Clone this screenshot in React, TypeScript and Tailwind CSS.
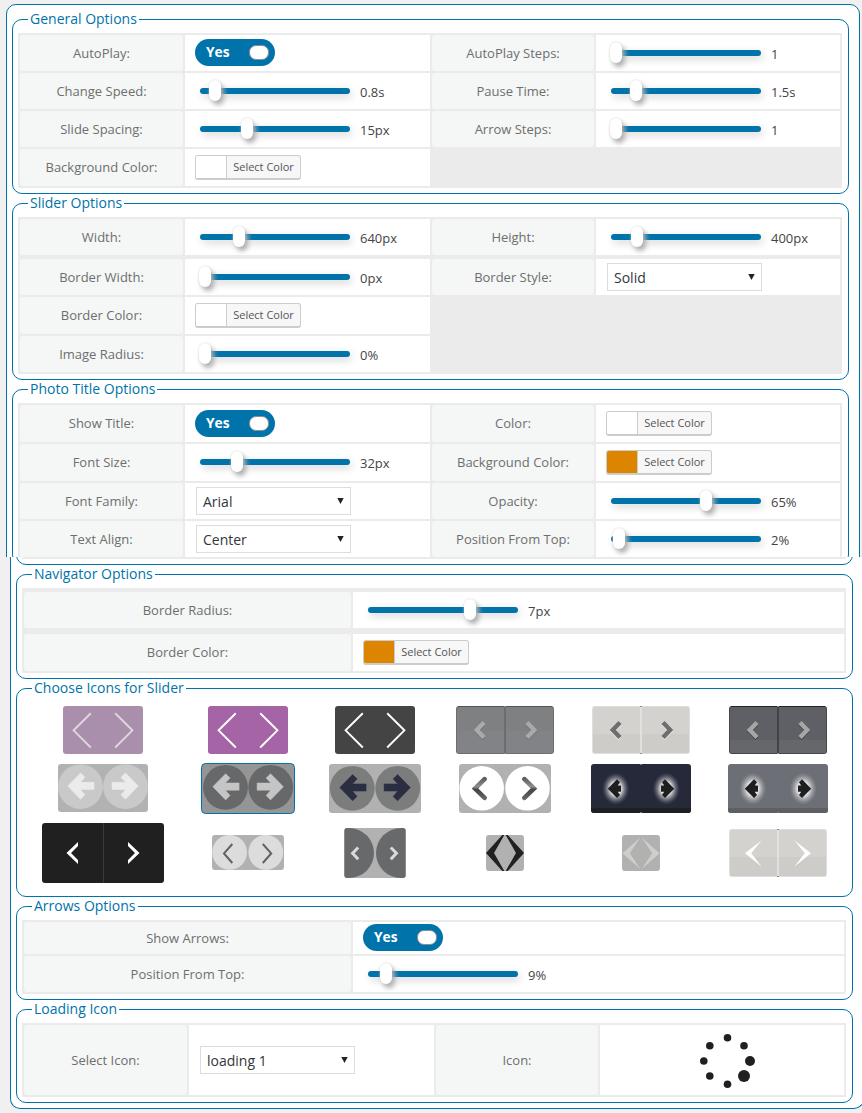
import React, { useId } from "react";

type Kids = { children?: React.ReactNode };

function Group({ title, className, children }: Kids & { title: string; className: string }) {
  return (
    <fieldset className={`box-border w-[837px] rounded-[10px] border border-[#0073aa] ${className}`}>
      <legend className="ml-[15px] h-[21px] px-[2px] text-[14px] leading-[20px] whitespace-nowrap text-[#0073aa]">
        {title}
      </legend>
      {children}
    </fieldset>
  );
}

function Table({ className = "pt-[2px]", children }: Kids & { className?: string }) {
  return (
    <div className={`mt-[3px] ml-[5px] flex w-[824px] flex-col gap-[2px] bg-[#ebebeb] px-[2px] pb-[2px] ${className}`}>
      {children}
    </div>
  );
}

const FOUR = "grid grid-cols-[163px_245px_162px_244px] gap-[2px]";
const TWO = "grid grid-cols-[327px_491px] gap-[2px]";

function Label({ children }: Kids) {
  return (
    <div className="flex items-center justify-center rounded-[3px] bg-[#f4f7f6] pb-[0.4px] text-[13px] leading-[18px] whitespace-nowrap text-[#6e6e6e]">
      {children}
    </div>
  );
}

function Cell({ children }: Kids) {
  return <div className="flex items-start bg-white">{children}</div>;
}

function Slider({ at, value }: { at: number; value: string }) {
  return (
    <>
      <div className="relative mt-[15px] ml-[15px] h-[6px] w-[150px] rounded-[3px] bg-[#0073aa] shadow-[2px_3px_8px_rgba(0,0,0,0.18)]">
        <div
          className="absolute top-[-8px] -ml-px h-[21px] w-[12px] rounded-[6px] bg-white shadow-[3px_4px_5px_#b0b0b0,0_0_2px_#d0d0d0]"
          style={{ left: at }}
        />
      </div>
      <span className="mt-[10px] ml-[10px] text-[13px] leading-[18px] text-[#444]">{value}</span>
    </>
  );
}

function Toggle({ className }: { className: string }) {
  return (
    <div className={`ml-[10px] flex h-[27px] w-[80px] items-center justify-between rounded-full bg-[#0073aa] pr-[6px] pl-[11px] ${className}`}>
      <span className="-mt-[2px] text-[13.8px] leading-[27px] font-bold text-white">Yes</span>
      <span className="h-[15px] w-[20px] rounded-[7px] border border-[#8c8c96] bg-white" />
    </div>
  );
}

function Color({ swatch = "bg-white" }: { swatch?: string }) {
  return (
    <div className="mt-[6px] ml-[10px] flex h-[25px] w-[106px] overflow-hidden rounded-[3px] border border-b-2 border-[#ccc] bg-[#f7f7f7]">
      <span className={`w-[30px] ${swatch}`} />
      <span className="flex-1 border-l border-[#ccc] text-center text-[11px] leading-[22px] whitespace-nowrap text-[#555]">
        Select Color
      </span>
    </div>
  );
}

function Select({ value, className = "mt-[4px]" }: { value: string; className?: string }) {
  return (
    <div className={`ml-[11px] flex h-[28px] w-[155px] items-center justify-between border border-[#ddd] bg-white pr-[6px] pl-[6px] ${className}`}>
      <span className="mt-[2px] text-[14px] leading-[20px] text-[#32373c]">{value}</span>
      <svg width="7" height="8" viewBox="0 0 7 8">
        <path d="M0.3 1H6.7L3.5 7Z" fill="#222" />
      </svg>
    </div>
  );
}

/* ---- arrow icon pairs ---- */

function Icon({ w, h, children }: Kids & { w: number; h: number }) {
  return (
    <svg width={w} height={h} viewBox={`0 0 ${w} ${h}`} className="block">
      {children}
    </svg>
  );
}

function ThinPair({ bg, fg }: { bg: string; fg: string }) {
  return (
    <Icon w={80} h={48}>
      <rect width="80" height="48" rx="3" fill={bg} />
      <path d="M27.8 7.3L10.6 24.3L27.8 41.5M52.2 7.3L69.4 24.3L52.2 41.5" fill="none" stroke={fg} strokeWidth="1.9" />
    </Icon>
  );
}

function TilePair({
  top, bottom, split, edge, line, cap, fg, shade,
}: {
  top: string; bottom: string; split: number; edge: string; line: string; cap: string; fg?: string; shade?: string;
}) {
  const d = "M28 16.5L20.8 24L28 31.5M71 16.5L78.2 24L71 31.5";
  return (
    <Icon w={98} h={48}>
      <rect width="98" height="48" rx="3" fill={edge} />
      <path d="M2 0.5H96" stroke={cap} strokeWidth="1" />
      <rect x="1" y="1" width="96" height="46" rx="2" fill={top} />
      <path d={`M1 ${split}H97V46L96 47H2L1 46Z`} fill={bottom} />
      <path d="M49 1V47" stroke={line} strokeWidth="1.8" />
      <path d="M48 0.5H50M48 47.5H50" stroke="#8b8b8b" />
      {fg ? (
        <>
          <path d={d} transform="translate(0 1)" fill="none" stroke={shade} strokeWidth="4.4" strokeLinejoin="miter" />
          <path d={d} fill="none" stroke={fg} strokeWidth="4.4" strokeLinejoin="miter" />
        </>
      ) : (
        <path d="M32.7 11.3L16 24.3L32.7 37.7L22.2 24.3ZM65.3 11.3L82 24.3L65.3 37.7L75.8 24.3Z" fill="#fff" />
      )}
    </Icon>
  );
}

const ARROW_L = "M9.7 22L22.5 9L27 13.3L22.3 18.3H36V25.5H22.3L27 30.8L22.5 35.2Z";
const ARROW_R = "M80.3 22L67.5 9L63 13.3L67.7 18.3H54V25.5H67.7L63 30.8L67.5 35.2Z";

function DiscPair({
  w, h, boxH, bg, disc, fg, c1, c2, cy, dx, dy, border,
}: {
  w: number; h: number; boxH: number; bg: string; disc: string; fg: string;
  c1: number; c2: number; cy: number; dx: number; dy: number; border?: boolean;
}) {
  return (
    <Icon w={w} h={h}>
      {border ? (
        <rect x="0.5" y="0.5" width={w - 1} height={boxH - 1} rx="4" fill={bg} stroke="#0073aa" />
      ) : (
        <rect width={w} height={boxH} rx="3" fill={bg} />
      )}
      <circle cx={c1} cy={cy} r="22.4" fill={disc} />
      <circle cx={c2} cy={cy} r="22.4" fill={disc} />
      <g transform={`translate(${dx} ${dy})`} fill={fg} stroke={fg} strokeWidth="0.5">
        <path d={ARROW_L} />
        <path d={ARROW_R} />
      </g>
    </Icon>
  );
}

function GlossPair() {
  const id = useId();
  return (
    <Icon w={92} h={49}>
      <defs>
        <linearGradient id={id} gradientUnits="userSpaceOnUse" x1="0" y1="13" x2="0" y2="36">
          <stop offset="0" stopColor="#555" />
          <stop offset="0.42" stopColor="#8f8f8f" />
          <stop offset="0.55" stopColor="#444" />
          <stop offset="1" stopColor="#6c6c6c" />
        </linearGradient>
      </defs>
      <rect width="92" height="49" rx="3" fill="#b1b1b1" />
      <circle cx="22.7" cy="24.3" r="22.3" fill="#fff" />
      <circle cx="68.5" cy="24.3" r="22.3" fill="#fff" />
      <path
        d="M25.6 15.2L16 24.5L25.6 33.8M65.4 15.2L75 24.5L65.4 33.8"
        fill="none" stroke={`url(#${id})`} strokeWidth="4.6" strokeLinecap="round"
      />
    </Icon>
  );
}

function GlowPair({ bg, base }: { bg: string; base: string }) {
  const id = useId();
  return (
    <Icon w={100} h={49}>
      <defs>
        <radialGradient id={id}>
          <stop offset="0" stopColor="#fff" />
          <stop offset="0.4" stopColor="#fff" stopOpacity="0.85" />
          <stop offset="0.65" stopColor="#fff" stopOpacity="0.38" />
          <stop offset="0.85" stopColor="#fff" stopOpacity="0.12" />
          <stop offset="1" stopColor="#fff" stopOpacity="0" />
        </radialGradient>
      </defs>
      <rect width="100" height="49" rx="3" fill={bg} />
      <path d="M0 44H100V46Q100 49 97 49H3Q0 49 0 46Z" fill={base} />
      <path d="M49 0.5H51M49 48.5H51" stroke="#777" />
      <ellipse cx="24.7" cy="24.7" rx="13.5" ry="16" fill={`url(#${id})`} />
      <ellipse cx="75.3" cy="24.7" rx="13.5" ry="16" fill={`url(#${id})`} />
      <g fill="#1e1e1e">
        <path d="M16.8 24.7L26 15.3L29 18.3L26.8 21.5H30V27.7H26.8L29 31L26 34Z" />
        <path d="M83.2 24.7L74 15.3L71 18.3L73.2 21.5H70V27.7H73.2L71 31L74 34Z" />
      </g>
    </Icon>
  );
}

function IconGrid() {
  return (
    <div className="mt-[3px] ml-[5px] grid w-[824px] grid-cols-[162px_128px_126px_134px_138px_136px] grid-rows-[56px_61px_68px] place-items-center">
      <ThinPair bg="#aa8fac" fg="#dcd8dc" />
      <ThinPair bg="#a464a6" fg="#ffffff" />
      <ThinPair bg="#444444" fg="#ffffff" />
      <TilePair top="#7f8081" bottom="#828387" split={25} edge="#6d6e70" line="#6b6b6b" cap="#525355" fg="#a9aaab" shade="#6f7072" />
      <TilePair top="#d3d2ce" bottom="#cdccc8" split={28} edge="#dededc" line="#e3e3e1" cap="#dcdcda" fg="#6f6e6d" shade="#eeeeec" />
      <TilePair top="#5e6066" bottom="#66676a" split={34} edge="#45464a" line="#3f4043" cap="#242427" fg="#a6a6a6" shade="#404146" />

      <DiscPair w={90} h={49} boxH={48} bg="#b2b2b2" disc="#c9c9c9" fg="#ebebeb" c1={22.5} c2={67.5} cy={22.6} dx={0} dy={0} />
      <DiscPair w={94} h={51} boxH={51} bg="#959595" disc="#666869" fg="#c5c5c5" c1={24.5} c2={69.7} cy={24.3} dx={2.1} dy={1.7} border />
      <DiscPair w={92} h={49} boxH={49} bg="#b1b1b1" disc="#7b7d7c" fg="#2b2d40" c1={23.3} c2={68.7} cy={24.3} dx={1.1} dy={1.6} />
      <GlossPair />
      <GlowPair bg="#262939" base="#1e1f20" />
      <GlowPair bg="#6d6f77" base="#5d5f63" />

      <Icon w={122} h={60}>
        <rect width="122" height="60" rx="3" fill="#202020" />
        <path d="M61.5 0V60" stroke="#3a3944" />
        <path d="M36 19L24.5 30L36 41V37L29 30L36 23ZM86 19L97.5 30L86 41V37L93 30L86 23Z" fill="#fff" />
      </Icon>
      <Icon w={72} h={36}>
        <rect width="72" height="35" rx="3" fill="#b1b1b1" />
        <circle cx="17.6" cy="17.4" r="17.4" fill="#dcdcdc" />
        <circle cx="53.8" cy="17.4" r="17.4" fill="#dcdcdc" />
        <path d="M20.3 9L12 18.4L20.3 28M50.8 9L59.2 18.4L50.8 28" fill="none" stroke="#5f6164" strokeWidth="2" />
      </Icon>
      <Icon w={62} h={50}>
        <rect width="62" height="50" rx="3" fill="#b1b1b1" />
        <path d="M3 0H5A25 25 0 0 1 5 50H3Q0.5 50 0.5 47V3Q0.5 0 3 0Z" fill="#67696b" />
        <path d="M59 0H57A25 25 0 0 0 57 50H59Q61.5 50 61.5 47V3Q61.5 0 59 0Z" fill="#67696b" />
        <path d="M14.2 19.5L8.6 25.3L14.2 31.2M46.8 19.5L52.4 25.3L46.8 31.2" fill="none" stroke="#dadada" strokeWidth="3" />
      </Icon>
      <Icon w={38} h={36}>
        <rect width="38" height="36" rx="3" fill="#b1b1b1" />
        <path d="M16.3 0H18.3L8 18L18.3 36H16.3L0 18ZM21.7 0H19.7L30 18L19.7 36H21.7L38 18Z" fill="#212121" />
      </Icon>
      <Icon w={38} h={36}>
        <rect width="38" height="36" rx="3" fill="#b1b1b1" />
        <path d="M18.3 2.5L7.8 18.3L18.3 34L0.4 18.3ZM19.7 2.5L30.2 18.3L19.7 34L37.6 18.3Z" fill="#cfcecb" />
      </Icon>
      <TilePair top="#d3d2ce" bottom="#cdccc8" split={28} edge="#dededc" line="#e3e3e1" cap="#dcdcda" />
    </div>
  );
}

const DOTS: [number, number, number][] = [
  [27.5, 4.7, 3.8], [44, 12.8, 3.8], [50, 28, 5], [44, 43, 6],
  [27.5, 51.2, 3.8], [9.8, 43, 3.8], [3.8, 28, 3.8], [9.8, 12.8, 3.8],
];

export default function App() {
  return (
    <div className="h-[1113px] w-[862px] overflow-hidden bg-[#f0f0f0] font-['Open_Sans',sans-serif]">
      <div className="h-[557px] overflow-hidden pt-[4px] pl-[6px]">
        <div className="h-[600px] w-[854px] rounded-[10px] border border-[#0073aa] bg-white pt-[4px] pl-[5px]">
          <Group title="General Options" className="h-[185px]">
            <Table>
              <div className={`${FOUR} h-[36px]`}>
                <Label>AutoPlay:</Label>
                <Cell><Toggle className="mt-[4px]" /></Cell>
                <Label>AutoPlay Steps:</Label>
                <Cell><Slider at={0} value="1" /></Cell>
              </div>
              <div className={`${FOUR} h-[36px]`}>
                <Label>Change Speed:</Label>
                <Cell><Slider at={10} value="0.8s" /></Cell>
                <Label>Pause Time:</Label>
                <Cell><Slider at={20} value="1.5s" /></Cell>
              </div>
              <div className={`${FOUR} h-[36px]`}>
                <Label>Slide Spacing:</Label>
                <Cell><Slider at={42} value="15px" /></Cell>
                <Label>Arrow Steps:</Label>
                <Cell><Slider at={0} value="1" /></Cell>
              </div>
              <div className={`${FOUR} h-[37px]`}>
                <Label>Background Color:</Label>
                <Cell><Color /></Cell>
              </div>
            </Table>
          </Group>

          <Group title="Slider Options" className="-mt-px h-[187px]">
            <Table>
              <div className={`${FOUR} mb-[2px] h-[36px]`}>
                <Label>Width:</Label>
                <Cell><Slider at={34} value="640px" /></Cell>
                <Label>Height:</Label>
                <Cell><Slider at={21} value="400px" /></Cell>
              </div>
              <div className={`${FOUR} h-[36px]`}>
                <Label>Border Width:</Label>
                <Cell><Slider at={0} value="0px" /></Cell>
                <Label>Border Style:</Label>
                <Cell><Select value="Solid" /></Cell>
              </div>
              <div className={`${FOUR} h-[37px]`}>
                <Label>Border Color:</Label>
                <Cell><Color /></Cell>
              </div>
              <div className={`${FOUR} h-[36px]`}>
                <Label>Image Radius:</Label>
                <Cell><Slider at={0} value="0%" /></Cell>
              </div>
            </Table>
          </Group>

          <Group title="Photo Title Options" className="-mt-px h-[186px]">
            <Table>
              <div className={`${FOUR} h-[37px]`}>
                <Label>Show Title:</Label>
                <Cell><Toggle className="mt-[5px]" /></Cell>
                <Label>Color:</Label>
                <Cell><Color /></Cell>
              </div>
              <div className={`${FOUR} h-[37px]`}>
                <Label>Font Size:</Label>
                <Cell><Slider at={32} value="32px" /></Cell>
                <Label>Background Color:</Label>
                <Cell><Color swatch="bg-[#dd8500]" /></Cell>
              </div>
              <div className={`${FOUR} h-[36px]`}>
                <Label>Font Family:</Label>
                <Cell><Select value="Arial" /></Cell>
                <Label>Opacity:</Label>
                <Cell><Slider at={90} value="65%" /></Cell>
              </div>
              <div className={`${FOUR} h-[36px]`}>
                <Label>Text Align:</Label>
                <Cell><Select value="Center" /></Cell>
                <Label>Position From Top:</Label>
                <Cell><Slider at={3} value="2%" /></Cell>
              </div>
            </Table>
          </Group>
        </div>
      </div>

      <div className="pl-[10px]">
        <div className="h-[552px] w-[854px] rounded-b-[10px] border border-t-0 border-[#0073aa] bg-white pl-[5px]">
          <div className="flex h-[8px] w-[837px] flex-col justify-end overflow-hidden">
            <div className="flex h-[40px] shrink-0 flex-col justify-end rounded-[10px] border border-[#0073aa] pb-[5px] pl-[5px]">
              <div className="h-[2px] w-[824px] bg-[#ebebeb]" />
            </div>
          </div>

          <Group title="Navigator Options" className="-mt-px h-[115px]">
            <Table className="pt-[4px]">
              <div className={`${TWO} mb-[4px] h-[36px]`}>
                <Label>Border Radius:</Label>
                <Cell><Slider at={97} value="7px" /></Cell>
              </div>
              <div className={`${TWO} h-[37px]`}>
                <Label>Border Color:</Label>
                <Cell><Color swatch="bg-[#dd8500]" /></Cell>
              </div>
            </Table>
          </Group>

          <Group title="Choose Icons for Slider" className="-mt-px h-[219px]">
            <IconGrid />
          </Group>

          <Group title="Arrows Options" className="-mt-px h-[104px]">
            <Table>
              <div className={`${TWO} h-[32px]`}>
                <Label>Show Arrows:</Label>
                <Cell><Toggle className="mt-[2px]" /></Cell>
              </div>
              <div className={`${TWO} h-[36px]`}>
                <Label>Position From Top:</Label>
                <Cell><Slider at={13} value="9%" /></Cell>
              </div>
            </Table>
          </Group>

          <Group title="Loading Icon" className="-mt-px h-[104px]">
            <Table>
              <div className={`${FOUR} h-[70px]`}>
                <Label>Select Icon:</Label>
                <Cell><Select value="loading 1" className="mt-[21px]" /></Cell>
                <Label>Icon:</Label>
                <Cell>
                  <svg width="56" height="56" viewBox="0 0 56 56" className="mt-[8px] ml-[100px]">
                    {DOTS.map(([x, y, r]) => (
                      <circle key={`${x}-${y}`} cx={x} cy={y} r={r} fill="#202020" />
                    ))}
                  </svg>
                </Cell>
              </div>
            </Table>
          </Group>
        </div>
      </div>
    </div>
  );
}
